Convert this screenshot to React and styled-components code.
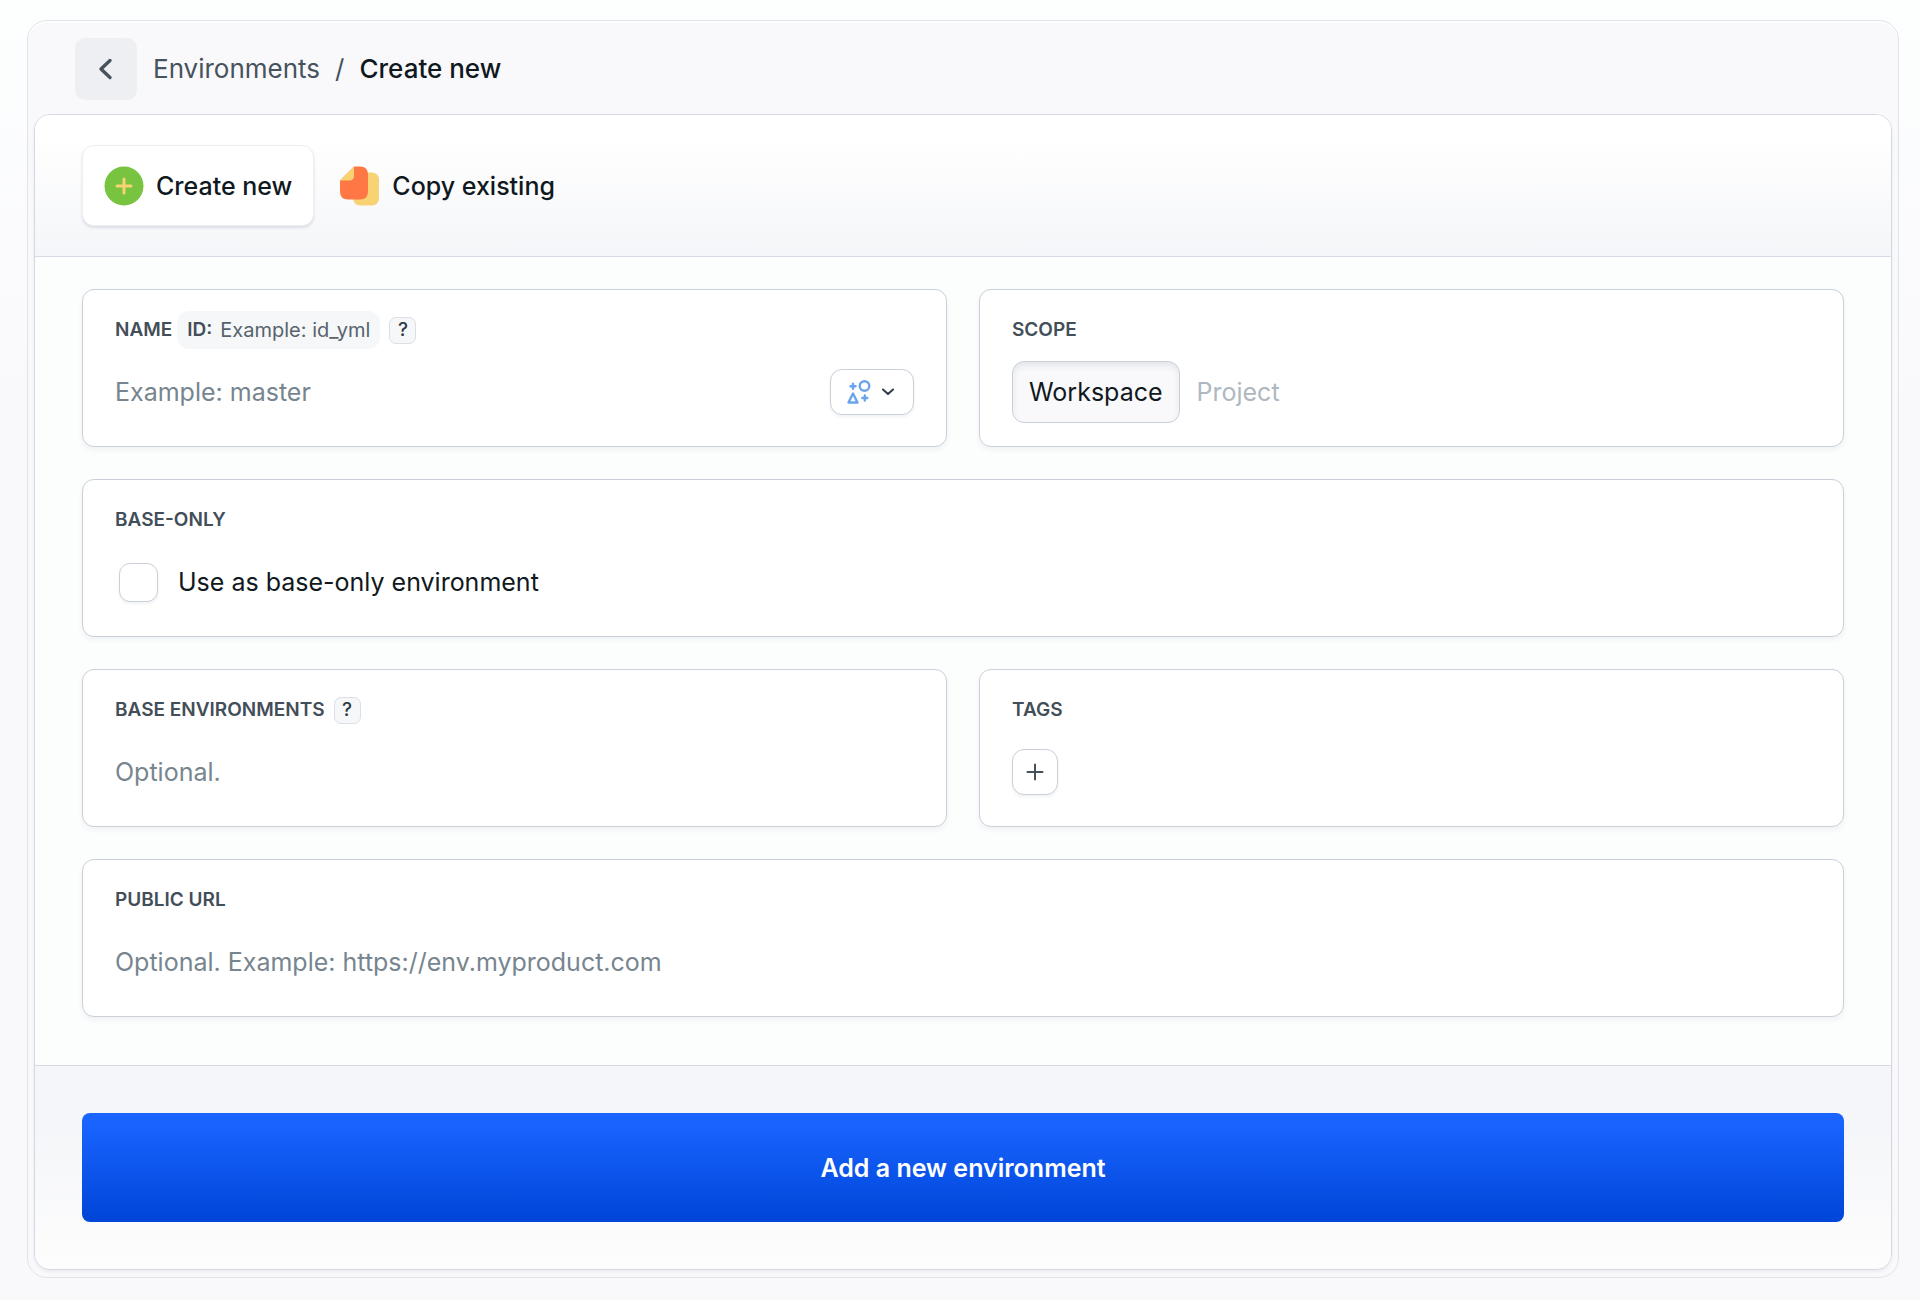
import React, { useState } from "react";
import styled, { createGlobalStyle } from "styled-components";

const GlobalStyle = createGlobalStyle`
  * {
    box-sizing: border-box;
  }
  body {
    margin: 0;
    background: linear-gradient(#fdfefe, #f9f9fc 420px);
    color: #101820;
    font-family: Inter, "Liberation Sans", sans-serif;
    font-size: 25px;
    line-height: 32px;
  }
  button, input {
    font: inherit;
    color: inherit;
  }
  button {
    cursor: pointer;
  }
`;

const Page = styled.main`
  padding: 20px 21px 22px 27px;
`;

const Shell = styled.div`
  padding: 0 6px 7px;
  border: 1px solid #e0e3ea;
  border-radius: 20px;
  background: #f9f9fc;
  box-shadow: inset 0 2px 0 #fff;
`;

const TopBar = styled.header`
  display: flex;
  align-items: center;
  gap: 16px;
  padding: 17px 41px 14px;
`;

const BackButton = styled.button`
  display: flex;
  align-items: center;
  justify-content: center;
  width: 62px;
  height: 62px;
  padding: 0;
  border: none;
  border-radius: 10px;
  background: #eeeff3;
`;

const Breadcrumb = styled.nav`
  display: flex;
  gap: 15px;
  color: #46525c;
  font-size: 26px;
  & a {
    color: inherit;
    text-decoration: none;
  }
`;

const Current = styled.span`
  color: #101820;
  font-weight: 500;
`;

const Panel = styled.form`
  overflow: hidden;
  border: 1px solid #d3d9e2;
  border-radius: 16px;
  background: #fcfdfd;
  box-shadow: 0 2px 3px rgba(30, 40, 70, 0.06);
`;

const Tabs = styled.div`
  display: flex;
  gap: 4px;
  padding: 30px 47px;
  border-bottom: 1px solid #d6dbe3;
  background: linear-gradient(#fff 15%, #f5f6f9);
`;

const Tab = styled.button`
  display: flex;
  align-items: center;
  gap: 12px;
  height: 81px;
  padding: 0 21px;
  border: 1px solid ${props => (props.$active ? "#eceef2" : "transparent")};
  border-radius: 12px;
  background: ${props => (props.$active ? "#fff" : "none")};
  box-shadow: ${props => (props.$active ? "0 2px 3px rgba(50, 65, 100, 0.14)" : "none")};
  font-weight: 500;
`;

const Fields = styled.div`
  display: grid;
  grid-template-columns: 1fr 1fr;
  gap: 32px;
  padding: 32px 47px 48px;
`;

const Card = styled.section`
  grid-column: ${props => (props.$wide ? "1 / -1" : "auto")};
  display: flex;
  flex-direction: column;
  gap: 12px;
  min-width: 0;
  padding: 21px 32px 23px;
  border: 1px solid #c9d0d9;
  border-radius: 12px;
  background: #fff;
  box-shadow: 0 3px 5px rgba(50, 65, 100, 0.06);
`;

const LabelRow = styled.div`
  display: flex;
  align-items: center;
  gap: 9px;
  height: 38px;
  font-size: 19px;
  line-height: 24px;
`;

const Label = styled.label`
  color: #424e58;
  font-weight: 600;
`;

const IdField = styled.label`
  display: flex;
  align-items: center;
  gap: 8px;
  height: 38px;
  padding: 0 10px;
  margin-left: -4px;
  border-radius: 12px;
  background: #f6f7f9;
  color: #424e58;
  font-weight: 600;
`;

const IdInput = styled.input`
  field-sizing: content;
  padding: 0;
  border: none;
  outline: none;
  background: none;
  font-size: 20px;
  font-weight: 400;
  &::placeholder {
    color: #56636d;
    opacity: 1;
  }
`;

const Help = styled.button`
  width: 27px;
  height: 27px;
  padding: 0;
  border: 1px solid #dcdfe6;
  border-radius: 7px;
  background: #f6f7f9;
  color: #2f3a44;
  font-weight: 500;
  line-height: 24px;
`;

const Control = styled.div`
  display: flex;
  align-items: center;
  gap: 16px;
  height: 62px;
`;

const TextInput = styled.input`
  flex: 1;
  min-width: 0;
  padding: 0;
  border: none;
  outline: none;
  background: none;
  &::placeholder {
    color: #77858f;
    opacity: 1;
  }
`;

const SmallButton = styled.button`
  display: flex;
  align-items: center;
  justify-content: center;
  gap: 11px;
  min-width: 46px;
  height: 46px;
  padding: ${props => (props.$menu ? "0 19px 0 16px" : "0")};
  border: 1px solid #c9d0d9;
  border-radius: 12px;
  background: #fff;
  box-shadow: 0 2px 3px rgba(50, 65, 100, 0.07);
`;

const ScopeButton = styled.button`
  height: 62px;
  padding: 0 16px;
  border: 1px solid ${props => (props.$active ? "#c9d0d9" : "transparent")};
  border-radius: 12px;
  background: ${props => (props.$active ? "#f9f9fb" : "none")};
  box-shadow: ${props => (props.$active ? "inset 0 4px 6px rgba(50, 65, 100, 0.1)" : "none")};
  color: ${props => (props.$active ? "#101820" : "#afb8c1")};
`;

const Scopes = styled.div`
  display: flex;
`;

const CheckLabel = styled.label`
  display: flex;
  align-items: center;
  gap: 20px;
  padding-left: 4px;
`;

const Checkbox = styled.input`
  appearance: none;
  width: 39px;
  height: 39px;
  margin: 0;
  border: 1px solid #c9d0d9;
  border-radius: 11px;
  background: #fff;
  box-shadow: 0 2px 3px rgba(50, 65, 100, 0.07);
  &:checked {
    background: #1964ff;
  }
`;

const Footer = styled.footer`
  padding: 47px;
  border-top: 1px solid #d6dbe3;
  background: linear-gradient(#f5f6f9 30%, #fdfdfd);
`;

const SubmitButton = styled.button`
  display: block;
  width: 100%;
  height: 109px;
  border: none;
  border-radius: 8px;
  background: linear-gradient(#1964ff 10%, #0047d9 95%);
  color: #fff;
  font-weight: 600;
`;

const BackIcon = () => (
  <svg width="24" height="24" viewBox="0 0 24 24" fill="none" stroke="#46525c" strokeWidth="3.4" strokeLinecap="round" strokeLinejoin="round" aria-hidden="true">
    <path d="M16 3.5 7 12l9 8.5" />
  </svg>
);

const CreateIcon = () => (
  <svg width="40" height="40" viewBox="0 0 40 40" aria-hidden="true">
    <circle cx="20" cy="20" r="19.5" fill="#78c440" />
    <path d="M20 13v14M13 20h14" stroke="#f8d374" strokeWidth="3" strokeLinecap="round" />
  </svg>
);

const CopyIcon = () => (
  <svg width="40" height="40" viewBox="0 0 40 40" aria-hidden="true">
    <rect x="13" y="6.5" width="26" height="33" rx="7" fill="#f8d374" />
    <path d="M14 .5h6q8 0 8 8v17q0 8-8 8H8q-8 0-8-8v-11z" fill="#ff7745" />
    <path d="M14 .5v9q0 5-5 5H0z" fill="#f8d374" />
  </svg>
);

const ShapesIcon = () => (
  <svg width="24" height="24" viewBox="0 0 24 24" fill="none" stroke="#6ba4ec" strokeWidth="2.4" strokeLinecap="round" strokeLinejoin="round" aria-hidden="true">
    <circle cx="17.5" cy="6" r="4.8" />
    <path d="M6 13.5 1.5 22.5h9z" />
    <path d="M6 3.8v5M3.5 6.3h5M17.8 15.5v5M15.3 18h5" />
  </svg>
);

const DownIcon = () => (
  <svg width="12" height="8" viewBox="0 0 12 8" fill="none" stroke="#2f3a44" strokeWidth="2" strokeLinecap="round" strokeLinejoin="round" aria-hidden="true">
    <path d="M1 1.5 6 6l5-4.5" />
  </svg>
);

const PlusIcon = () => (
  <svg width="18" height="18" viewBox="0 0 18 18" fill="none" stroke="#46525c" strokeWidth="2" strokeLinecap="round" aria-hidden="true">
    <path d="M9 1.5v15M1.5 9h15" />
  </svg>
);

export default function App() {
  const [mode, setMode] = useState("create");
  const [scope, setScope] = useState("Workspace");

  return (
    <Page>
      <GlobalStyle />
      <Shell>
        <TopBar>
          <BackButton type="button" aria-label="Back">
            <BackIcon />
          </BackButton>
          <Breadcrumb>
            <a href="#environments">Environments</a>
            <span>/</span>
            <Current>Create new</Current>
          </Breadcrumb>
        </TopBar>
        <Panel onSubmit={e => e.preventDefault()}>
          <Tabs>
            <Tab type="button" $active={mode === "create"} onClick={() => setMode("create")}>
              <CreateIcon />
              Create new
            </Tab>
            <Tab type="button" $active={mode === "copy"} onClick={() => setMode("copy")}>
              <CopyIcon />
              Copy existing
            </Tab>
          </Tabs>
          <Fields>
            <Card>
              <LabelRow>
                <Label htmlFor="name">NAME</Label>
                <IdField>
                  ID:
                  <IdInput type="text" placeholder="Example: id_yml" />
                </IdField>
                <Help type="button">?</Help>
              </LabelRow>
              <Control>
                <TextInput id="name" type="text" placeholder="Example: master" />
                <SmallButton type="button" $menu aria-label="Icon">
                  <ShapesIcon />
                  <DownIcon />
                </SmallButton>
              </Control>
            </Card>
            <Card>
              <LabelRow>
                <Label as="span" id="scope">SCOPE</Label>
              </LabelRow>
              <Scopes role="group" aria-labelledby="scope">
                {["Workspace", "Project"].map(item => (
                  <ScopeButton
                    key={item}
                    type="button"
                    $active={scope === item}
                    aria-pressed={scope === item}
                    onClick={() => setScope(item)}
                  >
                    {item}
                  </ScopeButton>
                ))}
              </Scopes>
            </Card>
            <Card $wide>
              <LabelRow>
                <Label as="span">BASE-ONLY</Label>
              </LabelRow>
              <Control>
                <CheckLabel>
                  <Checkbox type="checkbox" />
                  Use as base-only environment
                </CheckLabel>
              </Control>
            </Card>
            <Card>
              <LabelRow>
                <Label htmlFor="base">BASE ENVIRONMENTS</Label>
                <Help type="button">?</Help>
              </LabelRow>
              <Control>
                <TextInput id="base" type="text" placeholder="Optional." />
              </Control>
            </Card>
            <Card>
              <LabelRow>
                <Label as="span">TAGS</Label>
              </LabelRow>
              <Control>
                <SmallButton type="button" aria-label="Add tag">
                  <PlusIcon />
                </SmallButton>
              </Control>
            </Card>
            <Card $wide>
              <LabelRow>
                <Label htmlFor="url">PUBLIC URL</Label>
              </LabelRow>
              <Control>
                <TextInput id="url" type="text" placeholder="Optional. Example: https://env.myproduct.com" />
              </Control>
            </Card>
          </Fields>
          <Footer>
            <SubmitButton type="submit">Add a new environment</SubmitButton>
          </Footer>
        </Panel>
      </Shell>
    </Page>
  );
}
